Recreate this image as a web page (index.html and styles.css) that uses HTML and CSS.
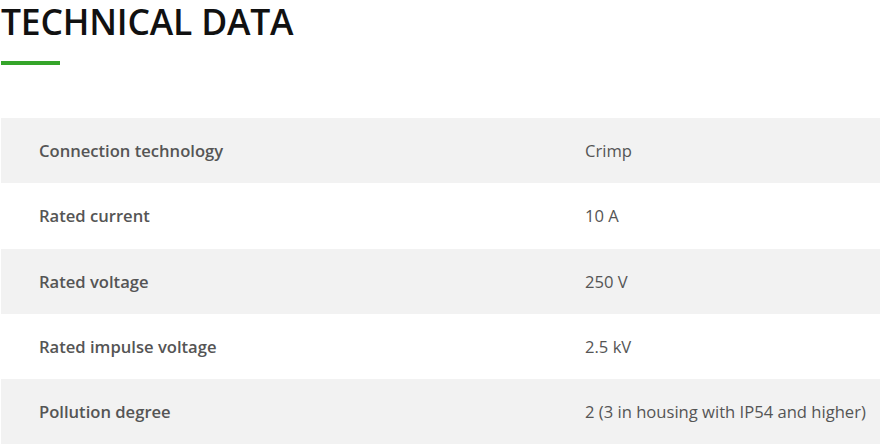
FILE: index.html
```html
<!DOCTYPE html>
<html>
<head>
<meta charset="utf-8">
<link rel="stylesheet" href="styles.css">
</head>
<body>
<section class="tech">
  <h2 class="title">TECHNICAL DATA</h2>
  <div class="rule"></div>
  <div class="table">
    <div class="row alt"><div class="key">Connection technology</div><div class="val">Crimp</div></div>
    <div class="row"><div class="key">Rated current</div><div class="val">10 A</div></div>
    <div class="row alt"><div class="key">Rated voltage</div><div class="val">250 V</div></div>
    <div class="row"><div class="key">Rated impulse voltage</div><div class="val">2.5 kV</div></div>
    <div class="row alt"><div class="key">Pollution degree</div><div class="val">2 (3 in housing with IP54 and higher)</div></div>
  </div>
</section>
</body>
</html>
```

FILE: styles.css
```css
html, body { margin: 0; padding: 0; background: #fff; }
.tech { padding: 0 0 0 1px; font-family: "Open Sans", "Liberation Sans", sans-serif; }
.title {
  margin: 0;
  font-family: "Open Sans", sans-serif;
  font-weight: 600;
  font-size: 35.5px;
  line-height: 40px;
  padding-top: 1px;
  color: #111;
  letter-spacing: -0.2px;
}
.rule { width: 59px; height: 4px; background: #35a52a; margin-top: 20px; }
.table { margin-top: 53px; }
.row { display: flex; height: 65.3px; align-items: center; }
.row.alt { background: #f2f2f2; }
.key { width: 546px; padding-left: 38px; font-weight: 600; font-size: 16.6px; color: #555; }
.val { font-size: 16.6px; color: #555; }
```
